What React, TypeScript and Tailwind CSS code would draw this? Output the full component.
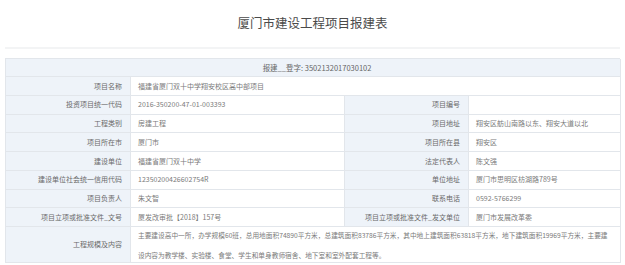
import React from 'react';

type Row = { label: string; value: string; label2?: string; value2?: string; wide?: boolean };

const rows: Row[] = [
  { label: '项目名称', value: '福建省厦门双十中学翔安校区高中部项目', wide: true },
  { label: '投资项目统一代码', value: '2016-350200-47-01-003393', label2: '项目编号', value2: '' },
  { label: '工程类别', value: '房建工程', label2: '项目地址', value2: '翔安区舫山南路以东、翔安大道以北' },
  { label: '项目所在市', value: '厦门市', label2: '项目所在县', value2: '翔安区' },
  { label: '建设单位', value: '福建省厦门双十中学', label2: '法定代表人', value2: '陈文强' },
  { label: '建设单位社会统一信用代码', value: '12350200426602754R', label2: '单位地址', value2: '厦门市思明区枋湖路789号' },
  { label: '项目负责人', value: '朱文智', label2: '联系电话', value2: '0592-5766299' },
  { label: '项目立项或批准文件_文号', value: '厦发改审批【2018】157号', label2: '项目立项或批准文件_发文单位', value2: '厦门市发展改革委' },
];

const font = { fontFamily: '"Noto Sans CJK SC", "Noto Sans", sans-serif' };

const Label = ({ children }: { children: React.ReactNode }) => (
  <div className="flex items-center justify-end pr-[8px] bg-[#eef3f9] border-r border-b border-[#e2e6eb] text-[7px] text-[#6a6a6a] whitespace-nowrap">
    {children}
  </div>
);

const Value = ({ children, span }: { children: React.ReactNode; span?: boolean }) => (
  <div
    className={`flex items-center pl-[7px] bg-white border-r border-b border-[#e2e6eb] text-[7px] text-[#7a7a7a] whitespace-nowrap ${
      span ? 'col-span-3' : ''
    }`}
  >
    {children}
  </div>
);

export default function App() {
  return (
    <div className="w-[625px] h-[265px] bg-white overflow-hidden px-[5px]" style={font}>
      <div className="h-[47px] flex items-center justify-center text-[12.5px] text-[#4a4a4a] pb-[1px]">
        厦门市建设工程项目报建表
      </div>
      <div className="h-[2px] bg-[#f3f4f5]" />
      <div className="mt-[9px] grid grid-cols-[125px_214px_124px_152px] grid-rows-[18px_repeat(8,18.75px)_36px] border-l border-t border-[#e2e6eb]">
        <div className="col-span-4 flex items-center justify-center pl-[8px] bg-[#eef3f9] border-r border-b border-[#e2e6eb] text-[7.5px] text-[#666]">
          报建__登字: 3502132017030102
        </div>
        {rows.map((r) => (
          <React.Fragment key={r.label}>
            <Label>{r.label}</Label>
            {r.wide ? (
              <Value span>{r.value}</Value>
            ) : (
              <>
                <Value>{r.value}</Value>
                <Label>{r.label2}</Label>
                <Value>{r.value2}</Value>
              </>
            )}
          </React.Fragment>
        ))}
        <Label>工程规模及内容</Label>
        <div className="col-span-3 flex flex-col justify-center pl-[7px] bg-white border-r border-b border-[#e2e6eb] text-[6.7px] text-[#7a7a7a] leading-[20px] whitespace-nowrap">
          <span>
            主要建设高中一所，办学规模60班，总用地面积74890平方米，总建筑面积83786平方米，其中地上建筑面积63818平方米，地下建筑面积19969平方米，主要建
          </span>
          <span>设内容为教学楼、实验楼、食堂、学生和单身教师宿舍、地下室和室外配套工程等。</span>
        </div>
      </div>
    </div>
  );
}
